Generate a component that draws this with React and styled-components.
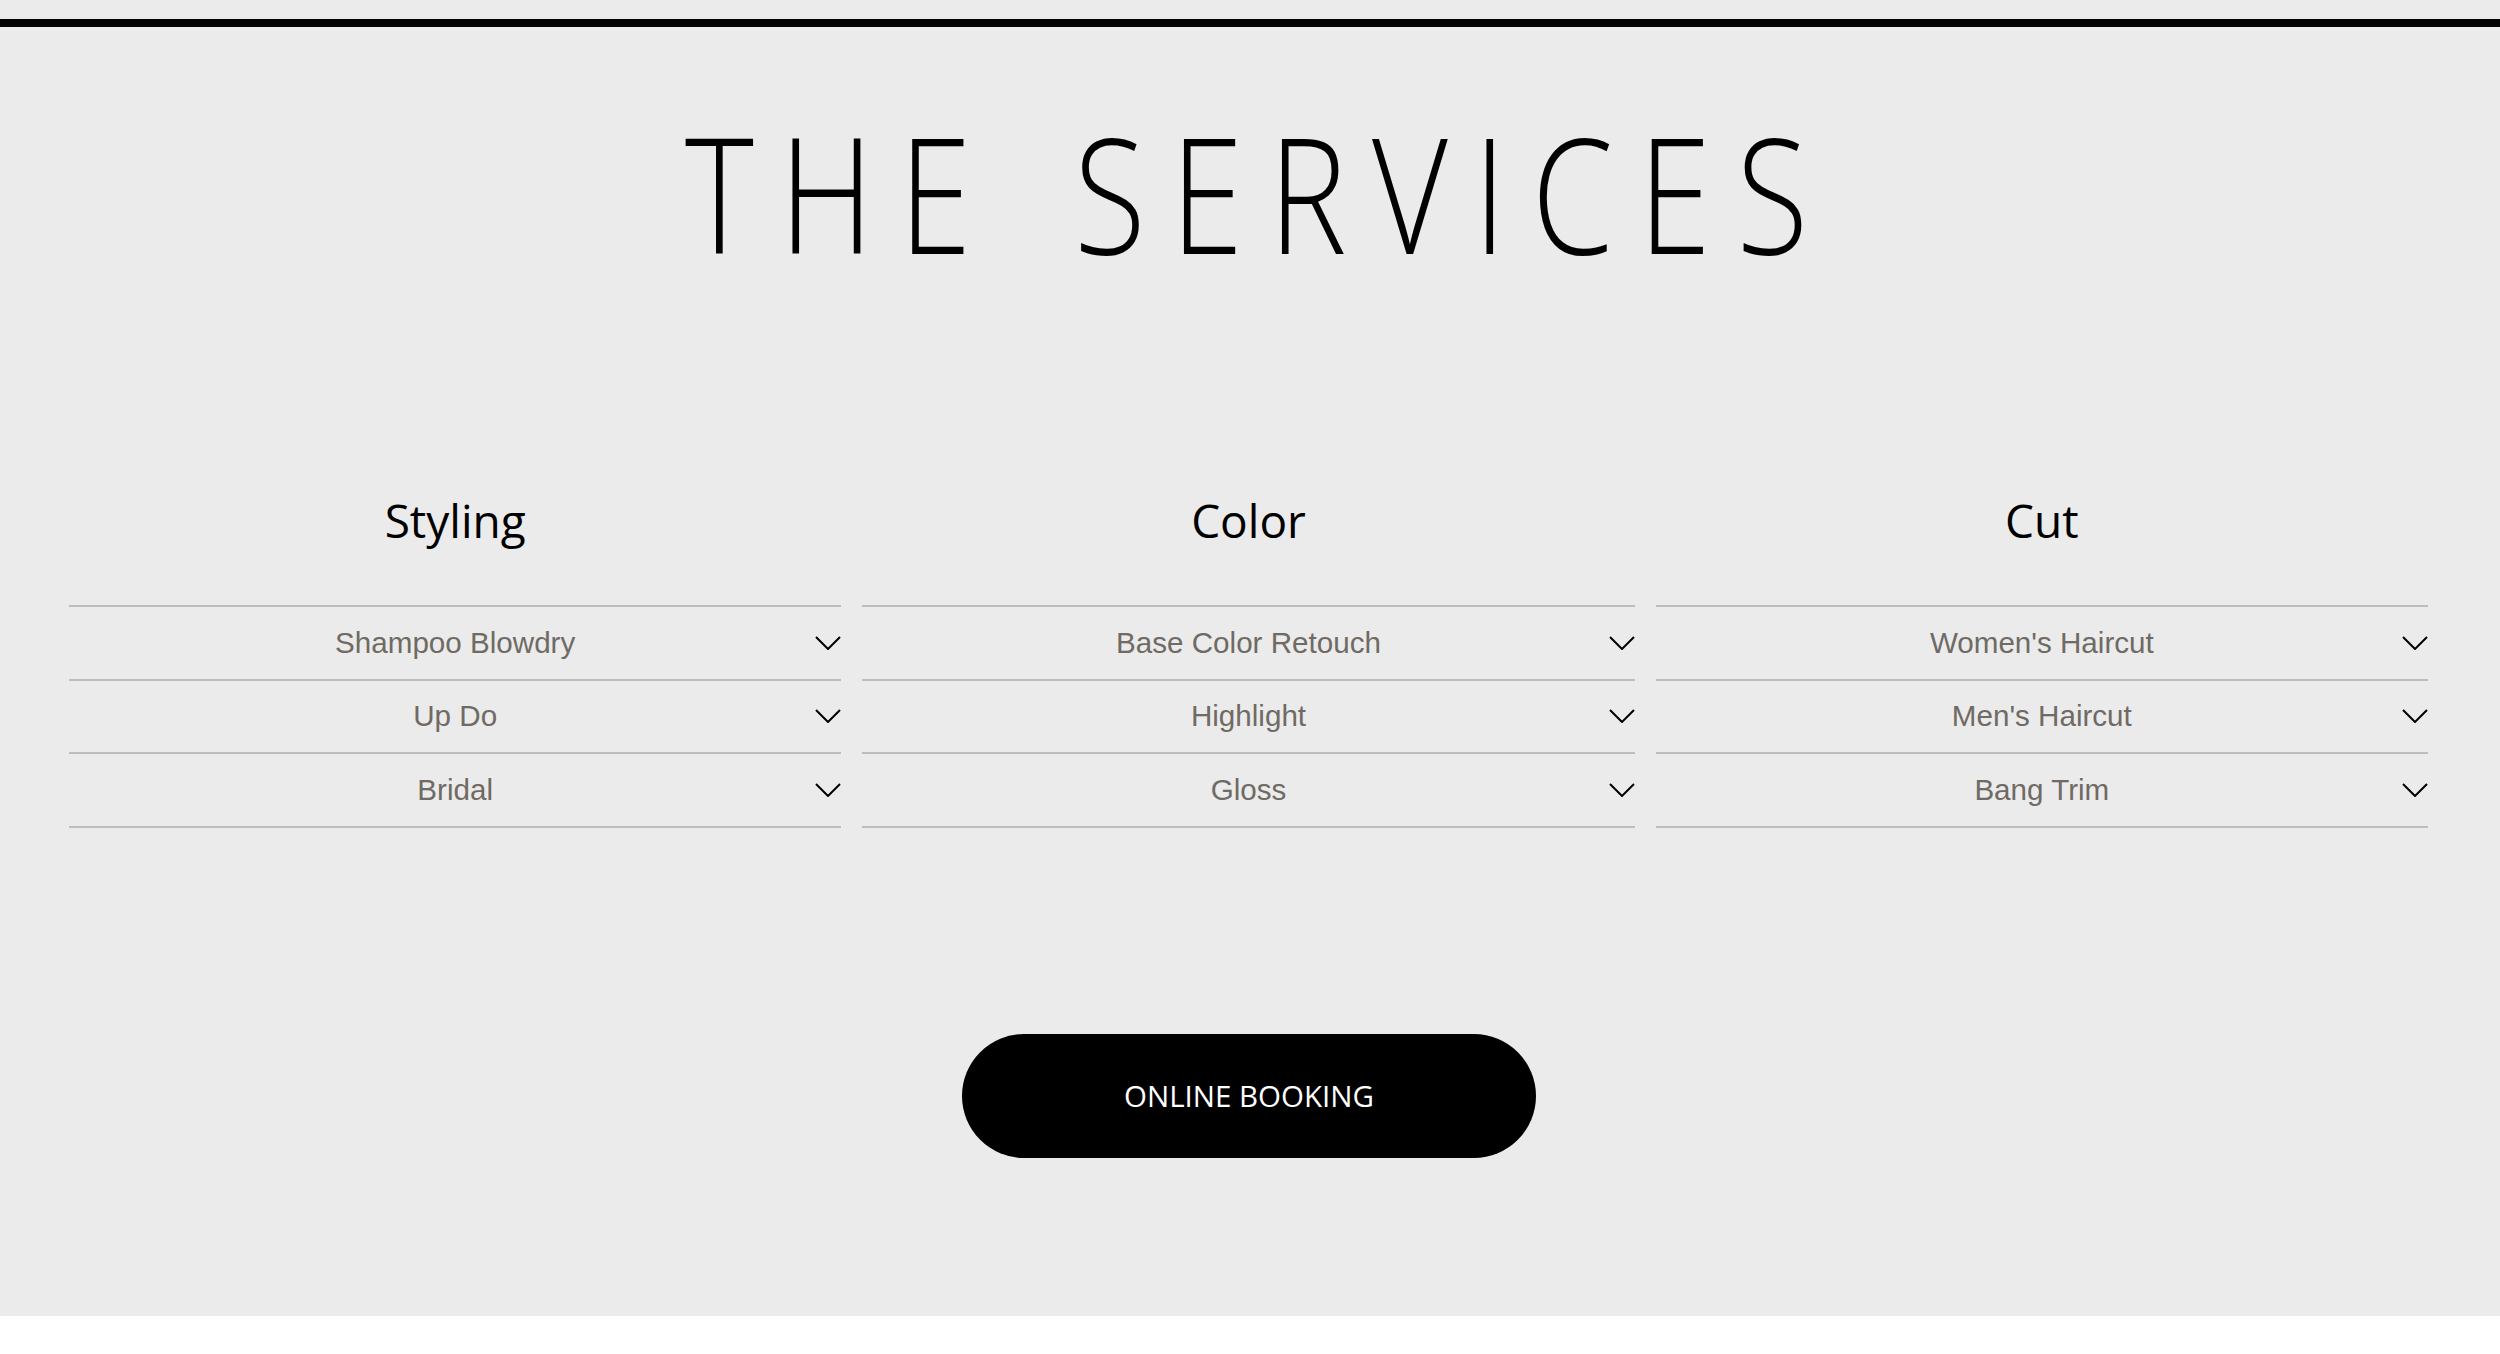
import React from "react";
import styled, { createGlobalStyle } from "styled-components";

const GlobalStyle = createGlobalStyle`
  html, body { margin: 0; padding: 0; background: #ffffff; }
  * { box-sizing: border-box; }
`;

const Section = styled.section`
  background: #ebebeb;
  padding: 19px 0 158px;
  display: flex;
  flex-direction: column;
  align-items: center;
`;

const TopRule = styled.div`
  align-self: stretch;
  height: 8px;
  background: #000;
`;

const Title = styled.h1`
  margin: 85px 0 0;
  font-family: "Open Sans", "DejaVu Sans", sans-serif;
  font-weight: 300;
  font-size: 160px;
  line-height: 160px;
  letter-spacing: 31px;
  word-spacing: -25.6px;
  color: #000;
  white-space: pre;
  padding-left: 23px;
  transform: scaleX(0.82);
  transform-origin: center;
`;

const Columns = styled.div`
  align-self: stretch;
  display: grid;
  grid-template-columns: repeat(3, 1fr);
  column-gap: 21px;
  margin: 225px 72px 0 69px;
`;

const Column = styled.div`
  display: flex;
  flex-direction: column;
`;

const ColumnTitle = styled.h2`
  margin: 0 0 61px;
  text-align: center;
  font-family: "Open Sans", "DejaVu Sans", sans-serif;
  font-weight: 400;
  font-size: 46px;
  line-height: 47px;
  color: #000;
`;

const List = styled.ul`
  list-style: none;
  margin: 0;
  padding: 0;
  border-top: 2px solid #bdbdbd;
`;

const Item = styled.li`
  position: relative;
  height: 73.5px;
  border-bottom: 2px solid #bdbdbd;
  display: flex;
  align-items: center;
  justify-content: center;
  font-family: "Liberation Sans", Arial, sans-serif;
  font-size: 29.6px;
  color: #6f6a64;
`;

const Chevron = styled.svg`
  position: absolute;
  right: 0;
  top: 50%;
  margin-top: -7px;
  width: 26px;
  height: 14px;
`;

const Booking = styled.button`
  margin-top: 206px;
  width: 574px;
  height: 124px;
  border: 0;
  border-radius: 62px;
  background: #000;
  color: #fff;
  font-family: "Open Sans", "DejaVu Sans", sans-serif;
  font-weight: 400;
  font-size: 29.5px;
  display: flex;
  align-items: center;
  justify-content: center;
  position: relative;
  left: -1px;
  cursor: pointer;
`;

const services = [
  { title: "Styling", items: ["Shampoo Blowdry", "Up Do", "Bridal"] },
  { title: "Color", items: ["Base Color Retouch", "Highlight", "Gloss"] },
  { title: "Cut", items: ["Women's Haircut", "Men's Haircut", "Bang Trim"] },
];

function ChevronDown() {
  return (
    <Chevron viewBox="0 0 26 14" fill="none">
      <polyline points="1,1 13,13 25,1" stroke="#000" strokeWidth="2" />
    </Chevron>
  );
}

export default function App() {
  return (
    <>
      <GlobalStyle />
      <Section>
        <TopRule />
        <Title>{"THE  SERVICES"}</Title>
        <Columns>
          {services.map((col) => (
            <Column key={col.title}>
              <ColumnTitle>{col.title}</ColumnTitle>
              <List>
                {col.items.map((it) => (
                  <Item key={it}>
                    {it}
                    <ChevronDown />
                  </Item>
                ))}
              </List>
            </Column>
          ))}
        </Columns>
        <Booking>ONLINE BOOKING</Booking>
      </Section>
    </>
  );
}
